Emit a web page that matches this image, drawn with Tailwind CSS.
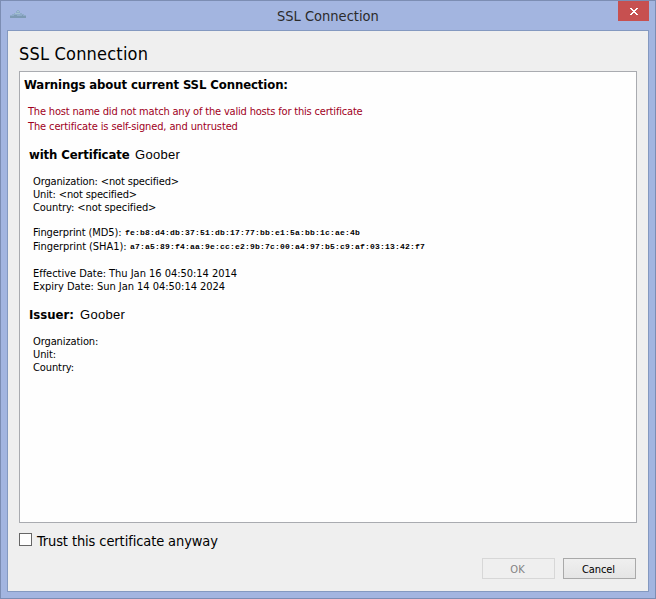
<!DOCTYPE html>
<html lang="en"><head><meta charset="utf-8"><title>SSL Connection</title>
<script src="https://cdn.jsdelivr.net/npm/@tailwindcss/browser@4"></script></head>
<body class="w-[656px] h-[599px] overflow-hidden font-['DejaVu_Sans_Condensed','DejaVu_Sans',sans-serif] [font-stretch:condensed] text-black text-[11px] leading-[13px] whitespace-nowrap">
<div class="w-[656px] h-[599px] flex flex-col bg-[#a3b5e0] border border-[#7c8db3] px-[6px] pb-[6px]">
  <header class="relative h-[29px] shrink-0 flex justify-between">
    <svg class="mt-[9px] ml-[3px] w-4 h-[9px]" viewBox="0 0 16 9"><path d="M0 8V5h2V4h2V3h2V1h1V0h2v1h1v2h2v1h2v1h2v3z" fill="#8fabc9"/><path d="M0 8V6h4V5h3v1h5V5h1v1h3v2z" fill="#7d9ab3"/><path d="M5 3h5v1H5zM7 1h2v1H7z" fill="#a3c1cf"/></svg>
    <h1 class="absolute left-[270px] top-[6px] text-[14.5px] leading-[18px] text-[#2b2b2b]">SSL Connection</h1>
    <button class="w-[31px] h-5 bg-[#c75050] flex items-center justify-center"><svg class="w-2 h-[7px] mt-[1px] mr-[-1px]" viewBox="0 0 8 7" shape-rendering="crispEdges" fill="#fff"><path d="M0 0h2v1h1v1h2V1h1V0h2v1H7v1H6v1H5v1h1v1h1v1h1v1H6V6H5V5H3v1H2v1H0V6h1V5h1V4h1V3H2V2H1V1H0z"/></svg></button>
  </header>
  <main class="flex-1 w-[642px] flex flex-col bg-[#efefef] border border-[#8499c0] px-[11px]">
    <h2 class="mt-[12px] h-[28px] text-[18px] leading-[22px] tracking-[0.2px]">SSL Connection</h2>
    <section class="w-[618px] h-[452px] bg-[#fefefe] border border-[#a9abb0] flex flex-col pl-[4px]">
      <h3 class="mt-[5px] text-[13px] leading-[16px] font-bold tracking-[-0.1px]">Warnings about current SSL Connection:</h3>
      <div class="mt-[11px] ml-[4px] leading-[15px] text-[#a0001c]"><p class="tracking-[-0.18px]">The host name did not match any of the valid hosts for this certificate</p><p class="tracking-[-0.12px]">The certificate is self-signed, and untrusted</p></div>
      <div class="mt-[13px] ml-[5px] flex text-[13px] leading-[16px]"><b class="w-[106px] tracking-[-0.1px]">with Certificate</b><span class="font-['Liberation_Sans',sans-serif] tracking-[0.3px]">Goober</span></div>
      <div class="mt-[12px] ml-[9px]"><p class="tracking-[-0.14px]">Organization: &lt;not specified&gt;</p><p class="tracking-[-0.14px]">Unit: &lt;not specified&gt;</p><p class="tracking-[-0.08px]">Country: &lt;not specified&gt;</p></div>
      <div class="mt-[12px] ml-[9px] leading-[14px]"><p class="flex"><span class="w-[92px] tracking-[-0.1px]">Fingerprint (MD5):</span><span class="font-['Liberation_Mono',monospace] text-[8px] font-bold tracking-[0.2px]">fe:b8:d4:db:37:51:db:17:77:bb:e1:5a:bb:1c:ae:4b</span></p><p class="flex"><span class="w-[97px] tracking-[-0.06px]">Fingerprint (SHA1):</span><span class="font-['Liberation_Mono',monospace] text-[8px] font-bold tracking-[0.2px]">a7:a5:89:f4:aa:9e:cc:e2:9b:7c:00:a4:97:b5:c9:af:03:13:42:f7</span></p></div>
      <div class="mt-[13px] ml-[9px] tracking-[-0.03px]"><p>Effective Date: Thu Jan 16 04:50:14 2014</p><p>Expiry Date: Sun Jan 14 04:50:14 2024</p></div>
      <div class="mt-[14px] ml-[5px] flex text-[13px] leading-[16px]"><b class="w-[51px]">Issuer:</b><span class="font-['Liberation_Sans',sans-serif] tracking-[0.3px]">Goober</span></div>
      <div class="mt-[12px] ml-[9px] tracking-[-0.1px]"><p>Organization:</p><p>Unit:</p><p>Country:</p></div>
    </section>
    <label class="mt-[8px] h-[20px] flex items-center gap-[5px] text-[14.5px] leading-[20px] tracking-[-0.1px]"><span class="w-[13px] h-[13px] bg-[#fefefe] border border-[#666] -mt-[3px]"></span><span>Trust this certificate anyway</span></label>
    <div class="mt-[7px] flex justify-end gap-2 pr-[1px]"><button class="w-[73px] h-[21px] pt-[1px] pr-[2px] border border-[#d7d7d7] text-[#838383]">OK</button><button class="w-[73px] h-[21px] pt-[1px] pr-[2px] border border-[#a9a9a9] bg-linear-to-b from-[#efefef] to-[#e5e5e5] tracking-[-0.1px]">Cancel</button></div>
  </main>
</div>
</body></html>
